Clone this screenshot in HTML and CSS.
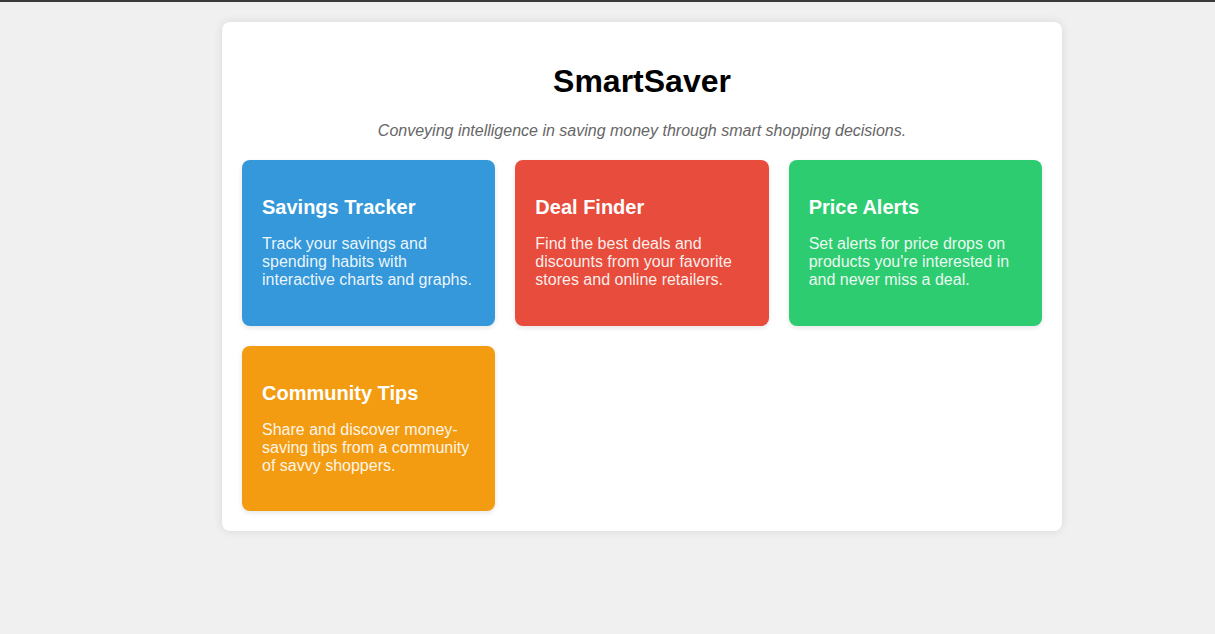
FILE: index.html
```html
<!DOCTYPE html>
<html lang="en">
<head>
<meta charset="UTF-8">
<title>SmartSaver</title>
<link rel="stylesheet" href="styles.css">
</head>
<body>
<div class="topbar"></div>
<div class="container">
  <h1 class="title">SmartSaver</h1>
  <p class="tagline">Conveying intelligence in saving money through smart shopping decisions.</p>
  <div class="grid">
    <div class="card blue">
      <h3>Savings Tracker</h3>
      <p>Track your savings and spending habits with interactive charts and graphs.</p>
    </div>
    <div class="card red">
      <h3>Deal Finder</h3>
      <p>Find the best deals and discounts from your favorite stores and online retailers.</p>
    </div>
    <div class="card green">
      <h3>Price Alerts</h3>
      <p>Set alerts for price drops on products you're interested in and never miss a deal.</p>
    </div>
    <div class="card orange">
      <h3>Community Tips</h3>
      <p>Share and discover money-saving tips from a community of savvy shoppers.</p>
    </div>
  </div>
</div>
</body>
</html>
```

FILE: styles.css
```css
html, body {
  margin: 0;
  padding: 0;
}
body {
  background: #f0f0f0;
  font-family: "Liberation Sans", Arial, sans-serif;
  min-height: 634px;
}
.topbar {
  height: 2px;
  background: #3a3a3a;
}
.container {
  width: 800px;
  margin: 20px 0 0 222px;
  padding: 20px;
  background: #ffffff;
  border-radius: 8px;
  box-shadow: 0 0 10px rgba(0, 0, 0, 0.1);
}
.title {
  font-size: 32px;
  font-weight: bold;
  text-align: center;
  color: #000;
  margin: 21.44px 0;
}
.tagline {
  text-align: center;
  font-style: italic;
  color: #666;
  font-size: 16px;
  margin: 0 0 20px;
}
.grid {
  display: grid;
  grid-template-columns: repeat(3, 1fr);
  gap: 20px;
}
.card {
  padding: 20px;
  border-radius: 8px;
  color: #fff;
  box-shadow: 0 2px 5px rgba(0, 0, 0, 0.1);
}
.card h3 {
  font-size: 20px;
  margin: 16.5px 0 15.5px;
}
.card p {
  font-size: 16px;
  margin: 16px 0 16.3px;
  color: rgba(255, 255, 255, 0.92);
}
.blue { background: #3498db; }
.red { background: #e74c3c; }
.green { background: #2ecc71; }
.orange { background: #f39c12; }
```
